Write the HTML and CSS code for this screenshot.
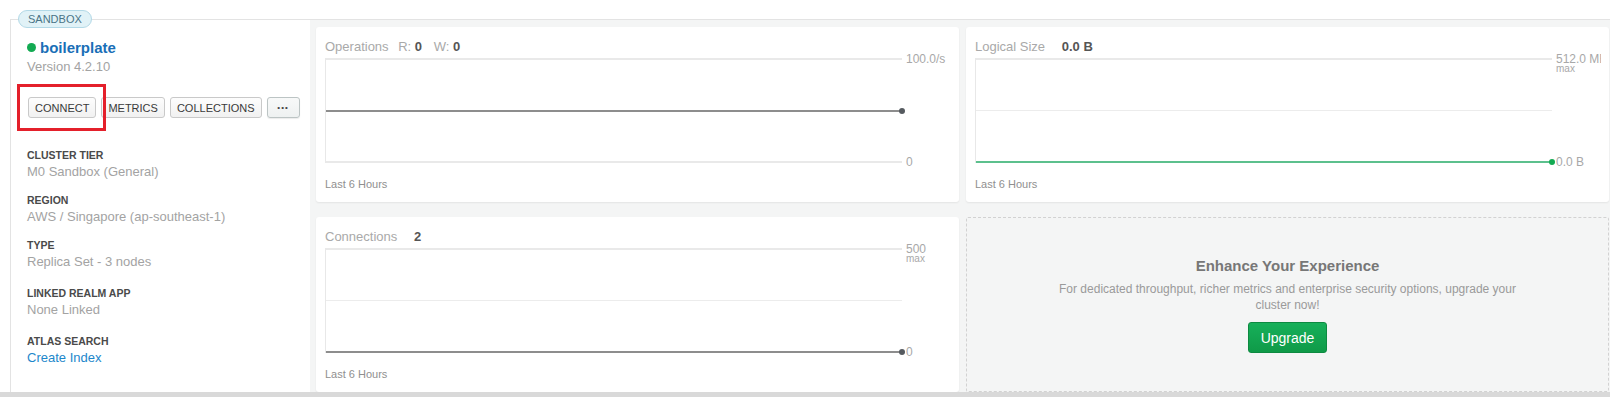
FILE: index.html
```html
<!DOCTYPE html>
<html lang="en">
<head>
    <meta charset="UTF-8">
    <title>Cluster Overview</title>
    <link rel="stylesheet" href="styles.css">
</head>
<body>

<div class="cluster">
    <span class="badge">SANDBOX</span>

    <!-- left summary column -->
    <aside class="summary">
        <div class="name"><span class="status-dot"></span>boilerplate</div>
        <div class="version">Version 4.2.10</div>

        <div class="actions">
            <button class="btn">CONNECT</button>
            <button class="btn">METRICS</button>
            <button class="btn">COLLECTIONS</button>
            <button class="btn btn-more">&bull;&bull;&bull;</button>
            <span class="highlight"></span>
        </div>

        <dl class="facts">
            <dt>CLUSTER TIER</dt>
            <dd>M0 Sandbox (General)</dd>
            <dt>REGION</dt>
            <dd>AWS / Singapore (ap-southeast-1)</dd>
            <dt>TYPE</dt>
            <dd class="wide">Replica Set - 3 nodes</dd>
            <dt>LINKED REALM APP</dt>
            <dd class="wide">None Linked</dd>
            <dt>ATLAS SEARCH</dt>
            <dd><a href="#">Create Index</a></dd>
        </dl>
    </aside>

    <!-- metric charts -->
    <section class="metrics">
        <div class="card">
            <div class="card-title">Operations <span class="stat">R: <strong>0</strong></span> <span class="stat stat-w">W: <strong>0</strong></span></div>
            <div class="chart">
                <div class="plot">
                    <div class="grid-line"></div>
                    <div class="data-line"></div>
                    <div class="grid-line"></div>
                </div>
                <div class="axis">
                    <div>100.0/s</div>
                    <div>0</div>
                </div>
            </div>
            <div class="range">Last 6 Hours</div>
        </div>

        <div class="card">
            <div class="card-title">Logical Size <strong class="big">0.0 B</strong></div>
            <div class="chart">
                <div class="plot">
                    <div class="grid-line"></div>
                    <div class="grid-line thin"></div>
                    <div class="data-line green"></div>
                </div>
                <div class="axis">
                    <div>512.0 MB<span class="max">max</span></div>
                    <div>0.0 B</div>
                </div>
            </div>
            <div class="range">Last 6 Hours</div>
        </div>

        <div class="card">
            <div class="card-title">Connections <strong class="big">2</strong></div>
            <div class="chart">
                <div class="plot">
                    <div class="grid-line"></div>
                    <div class="grid-line thin"></div>
                    <div class="data-line"></div>
                </div>
                <div class="axis">
                    <div>500<span class="max">max</span></div>
                    <div>0</div>
                </div>
            </div>
            <div class="range">Last 6 Hours</div>
        </div>

        <div class="upsell">
            <h3>Enhance Your Experience</h3>
            <p>For dedicated throughput, richer metrics and enterprise security options, upgrade your cluster now!</p>
            <button class="btn-upgrade">Upgrade</button>
        </div>
    </section>
</div>

<div class="bottom-bar"></div>

</body>
</html>
```

FILE: styles.css
```css
body {
    font-family: "Liberation Sans", Arial, sans-serif;
    background-color: #fff;
    margin: 0;
    padding-top: 19px;
    overflow: hidden;
}
.cluster {
    position: relative;
    display: flex;
    height: 372px;
    margin-left: 10px;
    border-top: 1px solid #e3e3e3;
    border-left: 1px solid #e3e3e3;
}
.badge {
    position: absolute;
    left: 7px;
    top: -10px;
    height: 16px;
    line-height: 16px;
    padding: 0 9px;
    font-size: 11px;
    color: #4a7487;
    background-color: #e1f2f7;
    border: 1px solid #b3d9e7;
    border-radius: 9px;
}

/* summary column */
.summary {
    width: 283px;
    padding: 18px 0 0 16px;
    background-color: #fff;
}
.name {
    display: flex;
    align-items: center;
    height: 18px;
    font-size: 15px;
    font-weight: bold;
    color: #1a6fb7;
}
.status-dot {
    width: 9px;
    height: 9px;
    margin-right: 4px;
    border-radius: 50%;
    background-color: #13aa52;
}
.version {
    margin-top: 2px;
    line-height: 18px;
    font-size: 13px;
    color: #a3a3a3;
}
.actions {
    position: relative;
    display: flex;
    gap: 5px;
    margin-top: 21px;
    padding-left: 1px;
}
.btn {
    height: 21px;
    padding: 0 6px;
    font-family: inherit;
    font-size: 11px;
    color: #3a3a3a;
    background: linear-gradient(#fdfdfd, #f1f1f1);
    border: 1px solid #c9c9c9;
    border-radius: 3px;
}
.btn-more {
    width: 33px;
    font-size: 8px;
    letter-spacing: 1px;
    color: #444;
    background: linear-gradient(#f8f9f9, #eef1f1);
    border-color: #bcc4c4;
    box-shadow: 0 1px 1px rgba(0, 0, 0, 0.08);
}
.highlight {
    position: absolute;
    left: -10px;
    top: -13px;
    width: 89px;
    height: 47px;
    box-sizing: border-box;
    border: 3px solid #e4202b;
}
.facts {
    margin: 29px 0 0 0;
}
.facts dt {
    line-height: 16px;
    font-size: 10.5px;
    font-weight: bold;
    color: #4a4a4a;
}
.facts dd {
    margin: 0 0 11px 0;
    line-height: 18px;
    font-size: 13px;
    color: #a3a3a3;
}
.facts dd.wide {
    margin-bottom: 14px;
}
.facts dd a {
    color: #1d87cb;
    text-decoration: none;
}

/* metric cards */
.metrics {
    flex: 1;
    display: grid;
    grid-template-columns: 1fr 1fr;
    grid-template-rows: 175px 175px;
    column-gap: 7px;
    row-gap: 15px;
    padding: 7px 1px 0 6px;
    background-color: #f4f5f5;
    overflow: hidden;
}
.card {
    padding: 11px 8px 0 9px;
    background-color: #fff;
    border-radius: 3px;
    box-shadow: 0 1px 2px rgba(0, 0, 0, 0.07);
}
.card-title {
    line-height: 18px;
    font-size: 13px;
    color: #a9a9a9;
}
.card-title strong {
    color: #555;
}
.card-title .stat {
    margin-left: 6px;
}
.card-title .stat-w {
    margin-left: 8px;
}
.card-title .big {
    margin-left: 13px;
}
.chart {
    display: flex;
    margin-top: 2px;
}
.plot {
    flex: 1;
    height: 105px;
    display: flex;
    flex-direction: column;
    justify-content: space-between;
    border-left: 1px solid #e8e8e8;
}
.grid-line {
    height: 2px;
    background-color: #e9e9e9;
}
.grid-line.thin {
    height: 1px;
    background-color: #ececec;
}
.data-line {
    position: relative;
    height: 2px;
    background-color: #8d8d8d;
}
.data-line::after {
    content: "";
    position: absolute;
    right: -3px;
    top: -2px;
    width: 6px;
    height: 6px;
    border-radius: 50%;
    background-color: #555a5f;
}
.data-line.green {
    background-color: #5cc08d;
}
.data-line.green::after {
    background-color: #13aa52;
}
.axis {
    width: 45px;
    margin: -6px 0 -6px 0;
    padding-left: 4px;
    display: flex;
    flex-direction: column;
    justify-content: space-between;
    overflow: hidden;
    white-space: nowrap;
    line-height: 14px;
    font-size: 12px;
    color: #a8a8a8;
}
.axis .max {
    display: block;
    line-height: 10px;
    font-size: 10px;
    margin-top: -2px;
}
.range {
    margin-top: 14px;
    line-height: 14px;
    font-size: 11px;
    color: #8f8f8f;
}

/* upgrade panel */
.upsell {
    display: flex;
    flex-direction: column;
    align-items: center;
    justify-content: center;
    text-align: center;
    border: 1px dashed #d2d2d2;
    border-radius: 2px;
}
.upsell h3 {
    margin: 0;
    line-height: 20px;
    font-size: 15px;
    color: #777;
}
.upsell p {
    max-width: 480px;
    margin: 5px 0 0 0;
    line-height: 16px;
    font-size: 12px;
    color: #9a9a9a;
}
.btn-upgrade {
    height: 31px;
    margin-top: 9px;
    padding: 0 12px;
    font-family: inherit;
    font-size: 14px;
    color: #fff;
    background: linear-gradient(#17b05a, #0f9a48);
    border: 1px solid #0d8a41;
    border-radius: 3px;
}
.bottom-bar {
    height: 5px;
    background-color: #d9d9d9;
}
```
